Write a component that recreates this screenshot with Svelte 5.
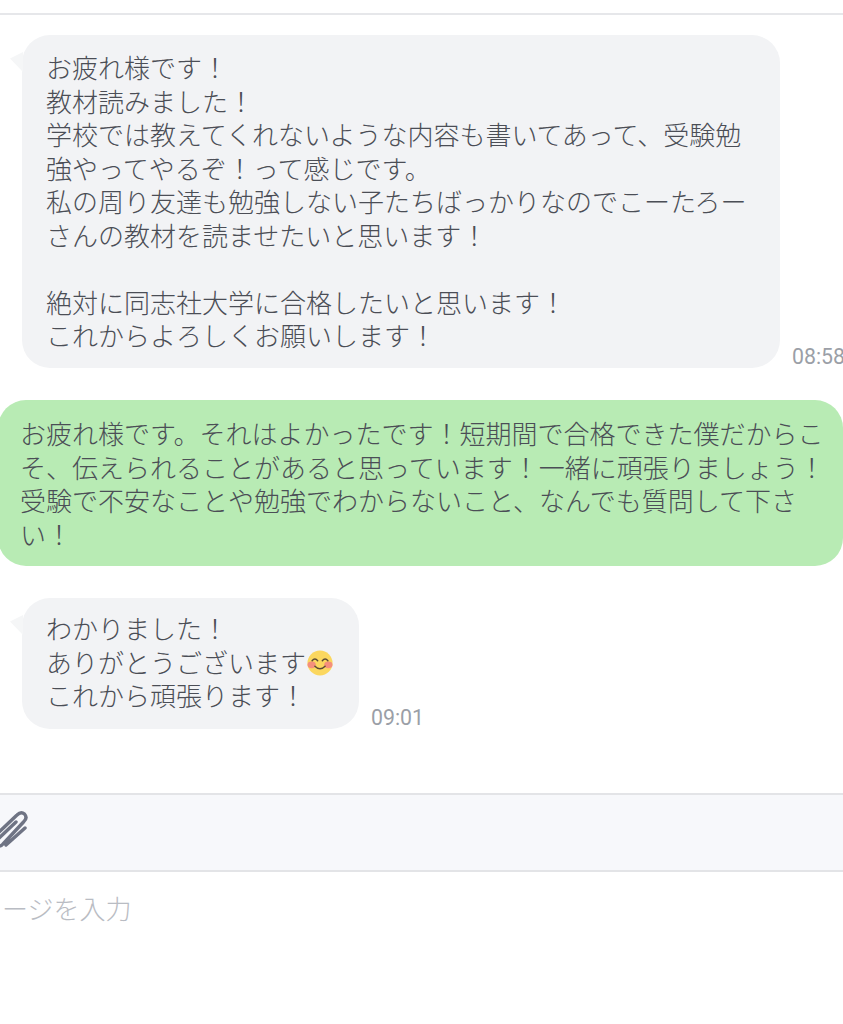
<script>
  const first = ['お疲れ様です！','教材読みました！','学校では教えてくれないような内容も書いてあって、受験勉','強やってやるぞ！って感じです。','私の周り友達も勉強しない子たちばっかりなのでこーたろー','さんの教材を読ませたいと思います！','\u00a0','絶対に同志社大学に合格したいと思います！','これからよろしくお願いします！'];
  const reply = ['お疲れ様です。それはよかったです！短期間で合格できた僕だからこ','そ、伝えられることがあると思っています！一緒に頑張りましょう！','受験で不安なことや勉強でわからないこと、なんでも質問して下さ','い！'];
</script>

<div class="page">
  <div class="top"></div>
  <main class="chat">
    <div class="row">
      <div class="bubble in wide">
        {#each first as line}<div>{line}</div>{/each}
      </div>
      <span class="time">08:58</span>
    </div>
    <div class="bubble out">
      {#each reply as line}<div>{line}</div>{/each}
    </div>
    <div class="row">
      <div class="bubble in short">
        <div>わかりました！</div>
        <div class="emoji-line">ありがとうございます<svg class="emoji" viewBox="0 0 28 28" aria-hidden="true">
          <circle cx="14" cy="14" r="13.5" fill="#fbd75f"/>
          <ellipse cx="5" cy="16" rx="4.5" ry="3.6" fill="#f58f7c"/>
          <ellipse cx="23" cy="16" rx="4.5" ry="3.6" fill="#f58f7c"/>
          <path d="M5.5 11.5q3-3.6 6 0M16.5 11.5q3-3.6 6 0M8.5 17.5q5.5 5.5 11 0" fill="none" stroke="#5b4a35" stroke-width="1.6" stroke-linecap="round"/>
        </svg></div>
        <div>これから頑張ります！</div>
      </div>
      <span class="time">09:01</span>
    </div>
  </main>
  <div class="tools">
    <svg class="clip" viewBox="0 0 40 44" aria-hidden="true">
      <path d="M-4 27 L17 7 Q21 3 24.5 6 Q28 10 23.5 14 L3 36 Q0 39.5 -3 37 M-3 32 L16 14 M6 37 L25 20" fill="none" stroke="#6f7484" stroke-width="3.4" stroke-linecap="round" stroke-linejoin="round"/>
    </svg>
  </div>
  <div class="input"><span>メッセージを入力</span></div>
</div>

<style>
  :global(body) { background: #fff; overflow: hidden; }
  .page {
    width: 843px;
    height: 1024px;
    overflow: hidden;
    font-family: "Noto Sans CJK JP", "Noto Sans", sans-serif;
    font-weight: 300;
    color: #4b4e56;
    font-size: 26px;
    line-height: 33.5px;
  }
  .top { height: 13px; border-bottom: 2px solid #e6e7ea; }
  .chat { display: flex; flex-direction: column; gap: 32px; padding-top: 20px; height: 778px; box-sizing: border-box; }
  .row { display: flex; align-items: flex-end; gap: 12px; margin-left: 22px; white-space: nowrap; }
  .bubble { border-radius: 28px; white-space: nowrap; position: relative; flex-shrink: 0; }
  .in { background: #f2f3f5; padding: 15px 24px 16.5px 24px; }
  .in::before {
    content: "";
    position: absolute;
    left: -12px;
    top: 17px;
    width: 13px;
    height: 20px;
    background: #f5f6f7;
    clip-path: polygon(100% 0, 0 32%, 100% 100%);
  }
  .wide { width: 710px; }
  .short { padding: 13px 26px 17px 24px; }
  .out { background: #b8ebb4; margin-left: -2px; width: 845px; box-sizing: border-box; padding: 16px 0 16px 22px; }
  .time { font-family: Roboto, sans-serif; font-weight: 400; font-size: 21.3px; line-height: 22px; color: #9b9fa7; flex-shrink: 0; }
  .emoji-line { display: flex; align-items: center; }
  .emoji { width: 26px; height: 26px; margin-left: 1px; margin-top: 3px; }
  .tools { height: 75px; background: #f7f8fb; border-top: 2px solid #e3e4e7; border-bottom: 2px solid #e3e4e7; }
  .clip { display: block; width: 40px; height: 44px; margin-top: 13px; }
  .input { padding-top: 19px; color: #b9bcc3; }
  .input span { display: block; margin-left: -76px; white-space: nowrap; }
</style>
